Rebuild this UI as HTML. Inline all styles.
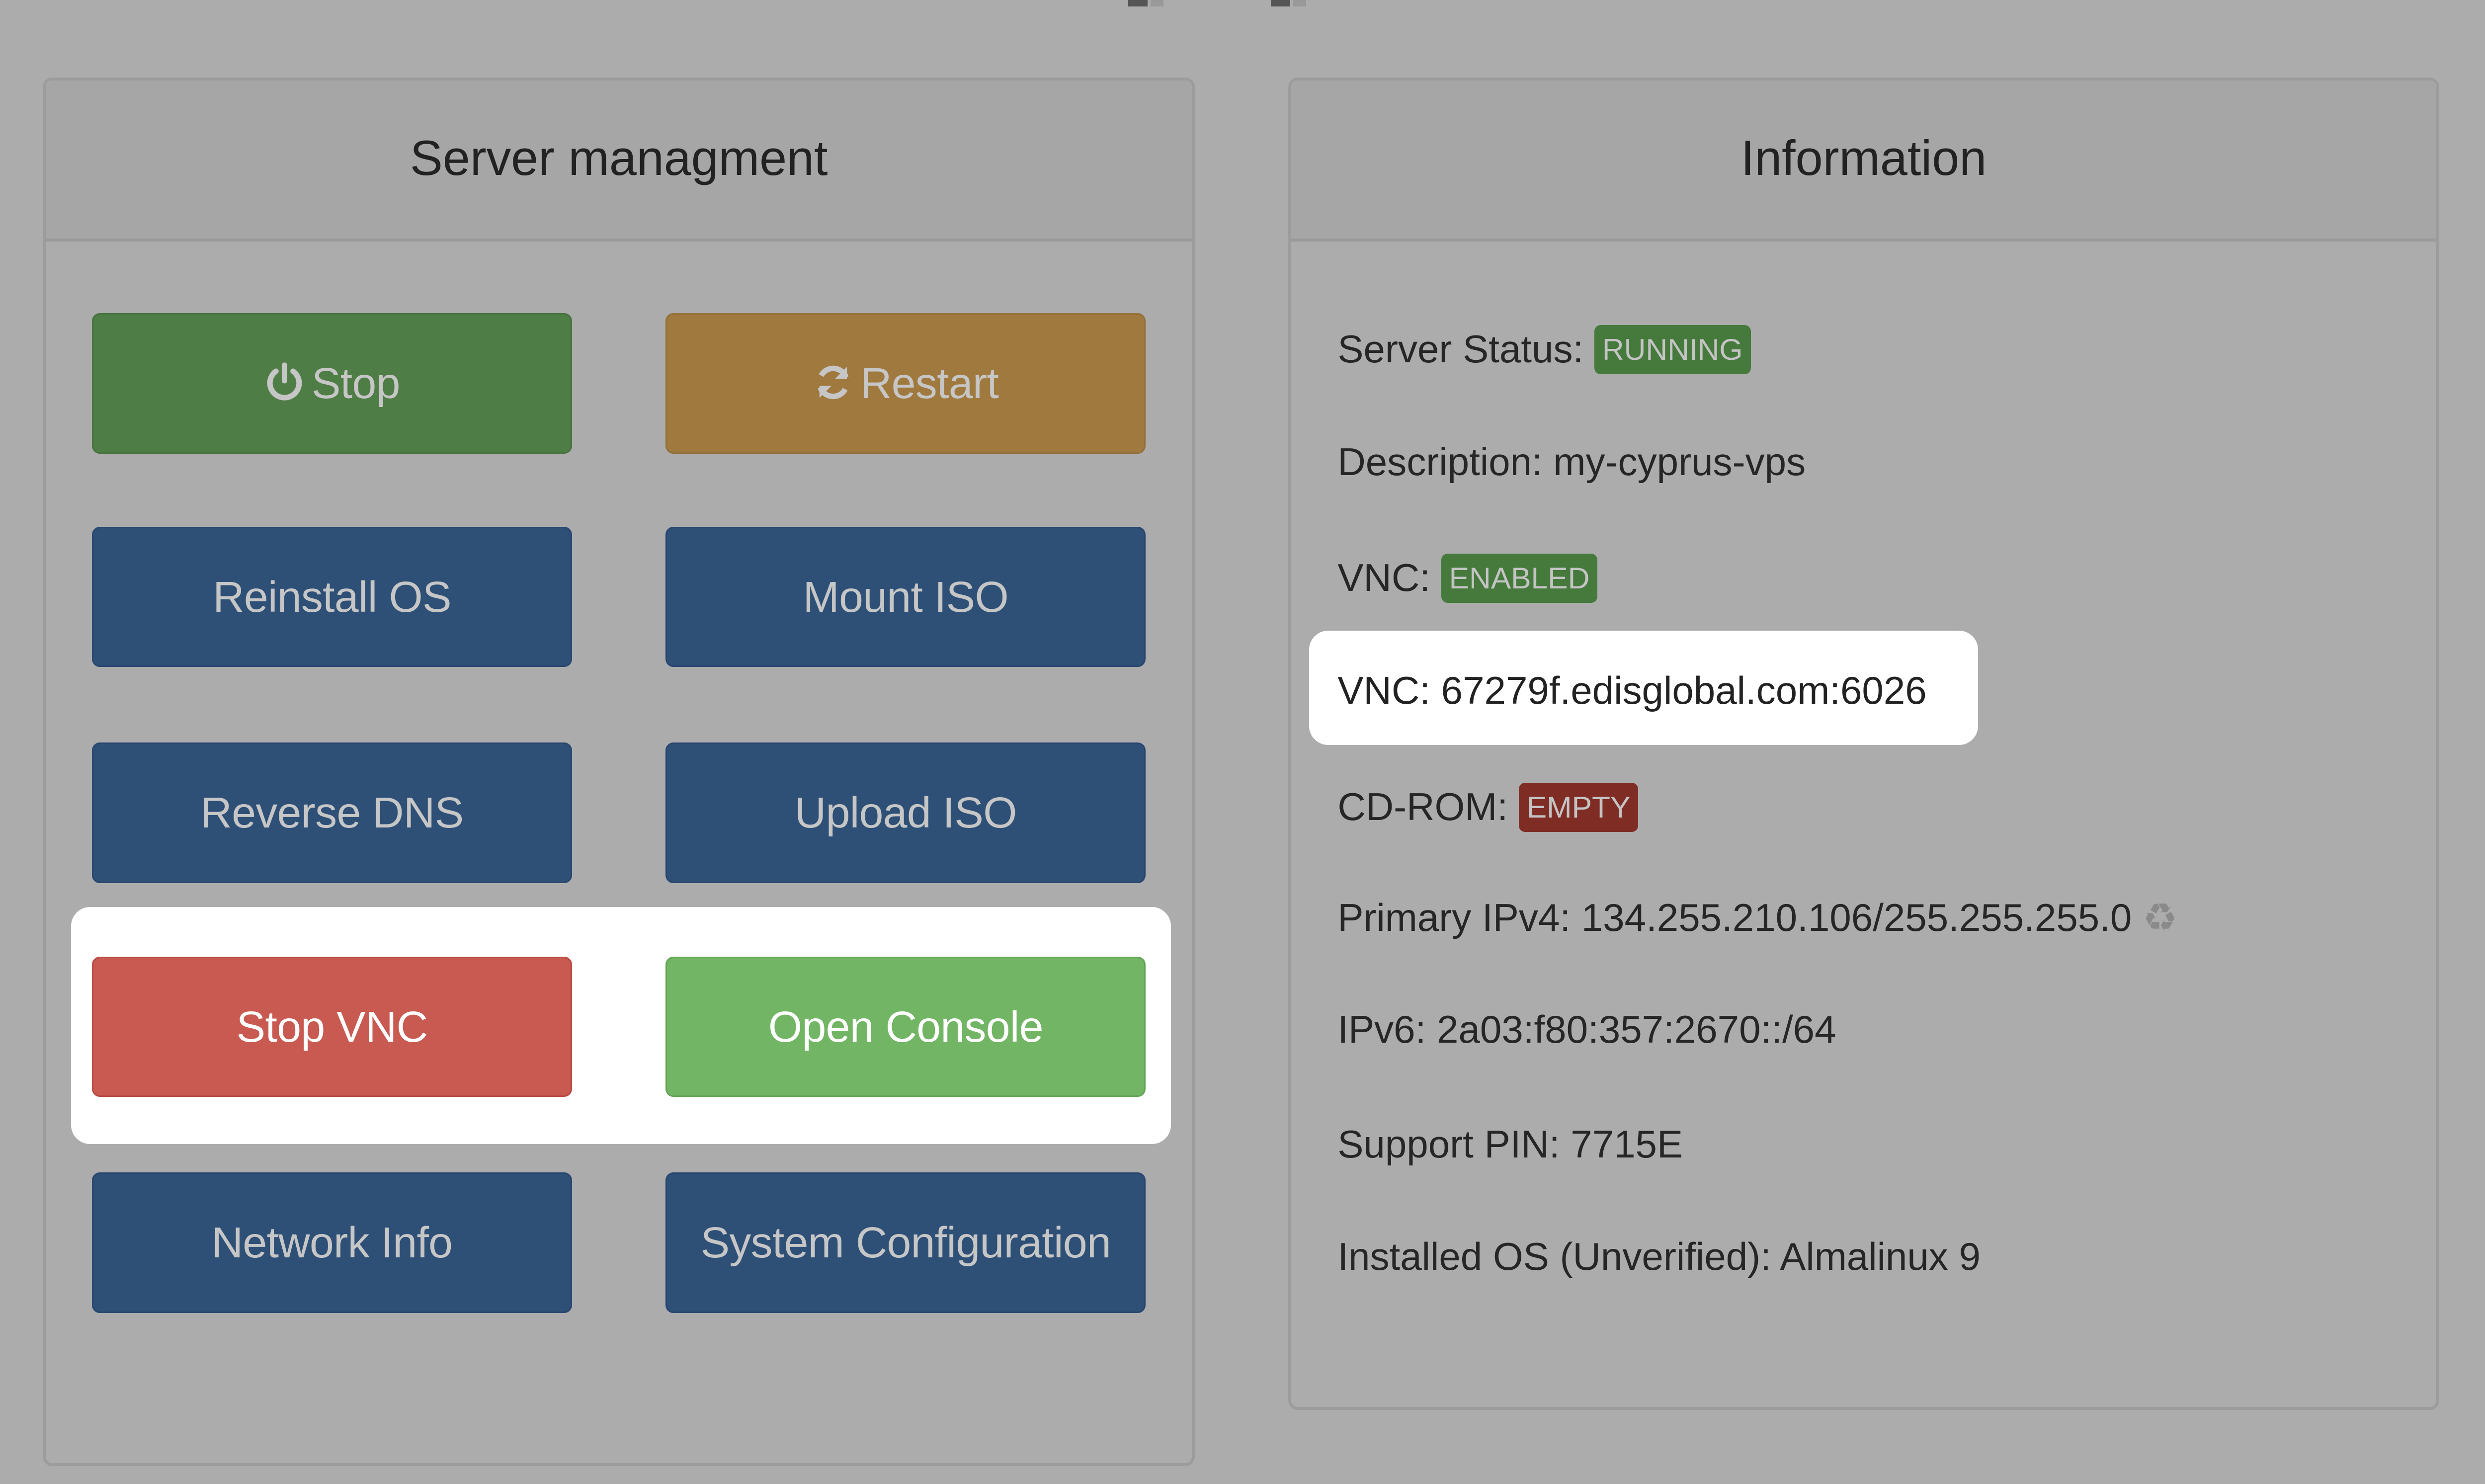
<!DOCTYPE html>
<html><head><meta charset="utf-8"><style>
html{font-size:calc(100vw / 156.8);background:#acacac}
html,body{margin:0;padding:0;width:100vw;height:100vh;overflow:hidden;background:#acacac}
#s{position:absolute;left:0;top:0;width:100vw;height:100vh;font-family:"Liberation Sans",sans-serif;}
.p{position:absolute;border:0.2rem solid #9c9c9c;border-radius:0.6rem;background:#acacac;box-sizing:border-box}
.h{position:absolute;left:0;right:0;top:0;height:10.62vh;background:#a6a6a6;border-bottom:0.2rem solid #9a9a9a;border-radius:0.5rem 0.5rem 0 0;text-align:center;line-height:10.48vh;font-size:3.1rem;color:#222}
.b{position:absolute;width:30.3rem;height:9.46vh;border-radius:0.5rem;box-sizing:border-box;text-align:center;line-height:9.3vh;font-size:2.75rem;color:#c6c6c6;white-space:nowrap;letter-spacing:-0.02rem}
.b svg{width:2.6rem;height:2.6rem;vertical-align:-0.3rem;margin-right:0.4rem}
.bl{background:#2e5077;border:0.1rem solid #284670}
.t{position:absolute;left:84.4rem;font-size:2.45rem;color:#262626;line-height:3rem;white-space:nowrap;transform:translateY(-50%)}
.g{display:inline-block;background:#457a3c;color:#c4c4c4;font-size:1.9rem;padding:0 0.5rem;border-radius:0.4rem;line-height:3.1rem;vertical-align:middle;margin-top:-0.3rem}
.w{position:absolute;background:#fff;border-radius:1.2rem}
</style></head><body><div id="s">
<div style="position:absolute;left:71.2rem;top:0;width:1.2rem;height:0.44vh;background:#555"></div>
<div style="position:absolute;left:72.6rem;top:0;width:0.8rem;height:0.44vh;background:#999"></div>
<div style="position:absolute;left:80.2rem;top:0;width:1.2rem;height:0.44vh;background:#555"></div>
<div style="position:absolute;left:81.6rem;top:0;width:0.8rem;height:0.44vh;background:#999"></div>

<div class="p" style="left:2.7rem;top:5.24vh;width:72.7rem;height:93.55vh"><div class="h">Server managment</div></div>
<div class="p" style="left:81.3rem;top:5.24vh;width:72.6rem;height:89.77vh"><div class="h">Information</div></div>

<div class="b" style="left:5.8rem;top:21.1vh;background:#4e7d45;border:0.1rem solid #477340"><svg viewBox="0 0 24 24" fill="none" stroke="#c6c6c6" stroke-width="3.2" stroke-linecap="round"><path d="M7 5.5A8.5 8.5 0 1 0 17 5.5"/><path d="M12 2v9"/></svg>Stop</div>
<div class="b" style="left:42rem;top:21.1vh;background:#a0793f;border:0.1rem solid #94703a"><svg viewBox="0 0 24 24" fill="none" stroke="#c6c6c6" stroke-width="3.2"><path d="M19.5 9A8 8 0 0 0 5 8"/><path d="M4.5 15A8 8 0 0 0 19 16"/><path d="M20 3v7h-7z" fill="#c6c6c6" stroke="none"/><path d="M4 21v-7h7z" fill="#c6c6c6" stroke="none"/></svg>Restart</div>
<div class="b bl" style="left:5.8rem;top:35.5vh">Reinstall OS</div>
<div class="b bl" style="left:42rem;top:35.5vh">Mount ISO</div>
<div class="b bl" style="left:5.8rem;top:50.05vh">Reverse DNS</div>
<div class="b bl" style="left:42rem;top:50.05vh">Upload ISO</div>
<div class="w" style="left:4.5rem;top:61.11vh;width:69.4rem;height:16vh"></div>
<div class="b" style="left:5.8rem;top:64.46vh;background:#c95a51;border:0.1rem solid #b84a42;color:#fff">Stop VNC</div>
<div class="b" style="left:42rem;top:64.46vh;background:#72b564;border:0.1rem solid #62a556;color:#fff">Open Console</div>
<div class="b bl" style="left:5.8rem;top:79.01vh">Network Info</div>
<div class="b bl" style="left:42rem;top:79.01vh">System Configuration</div>

<div class="t" style="top:23.57vh">Server Status: <span class="g">RUNNING</span></div>
<div class="t" style="top:31.14vh">Description: my-cyprus-vps</div>
<div class="t" style="top:38.99vh">VNC: <span class="g">ENABLED</span></div>
<div class="w" style="left:82.6rem;top:42.49vh;width:42.2rem;height:7.71vh"></div>
<div class="t" style="top:46.56vh;color:#222">VNC: 67279f.edisglobal.com:6026</div>
<div class="t" style="top:54.42vh">CD-ROM: <span class="g" style="background:#7f2c25">EMPTY</span></div>
<div class="t" style="top:61.84vh">Primary IPv4: 134.255.210.106/255.255.255.0 <span style="color:#8a8a8a">♻</span></div>
<div class="t" style="top:69.4vh">IPv6: 2a03:f80:357:2670::/64</div>
<div class="t" style="top:77.11vh">Support PIN: 7715E</div>
<div class="t" style="top:84.68vh">Installed OS (Unverified): Almalinux 9</div>
</div></body></html>
